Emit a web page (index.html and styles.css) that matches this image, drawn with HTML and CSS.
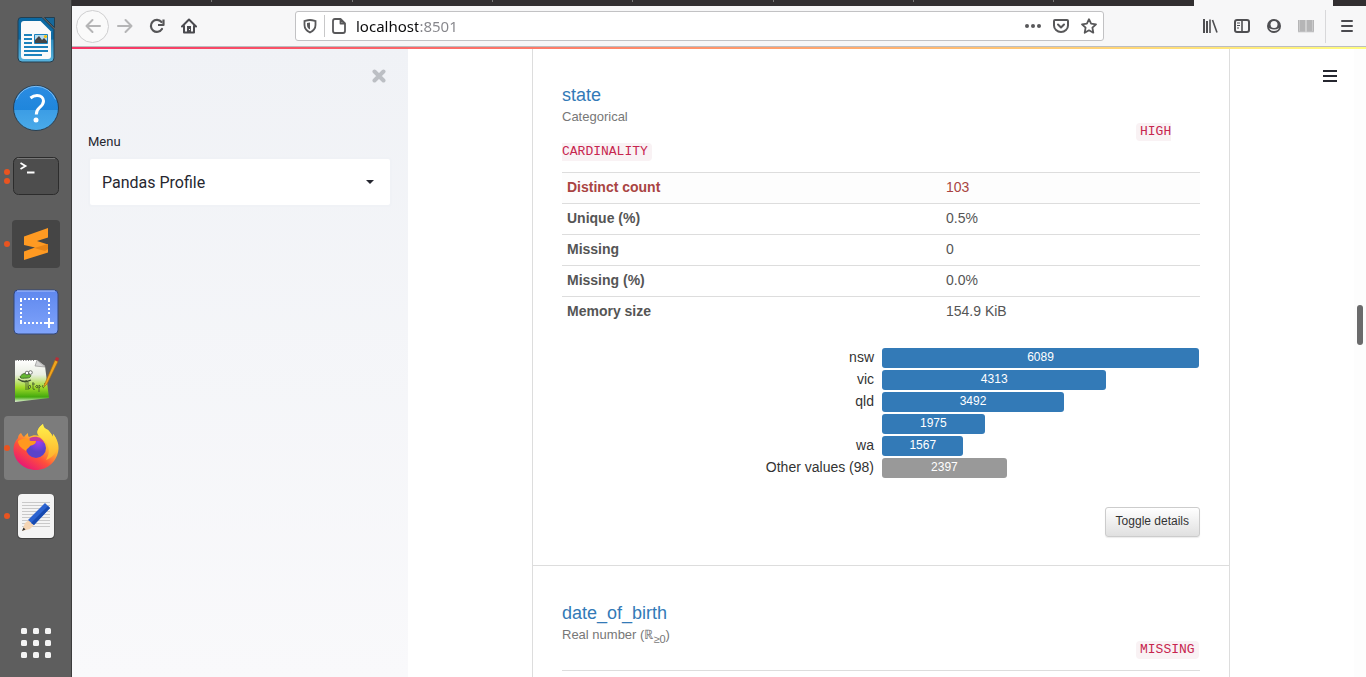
FILE: index.html
```html
<!DOCTYPE html>
<html lang="en">
<head>
<meta charset="utf-8">
<title>Pandas Profile</title>
<link rel="stylesheet" href="styles.css">
</head>
<body class="desktop">
<nav class="dock" aria-label="Applications">
  <button class="app" aria-label="Writer">
    <svg width="48" height="48" viewBox="0 0 48 48">
      <defs><linearGradient id="wr" x2="0" y2="1"><stop offset="0" stop-color="#0b69a3"/><stop offset=".49" stop-color="#0f6ca5"/><stop offset=".5" stop-color="#318fc2"/><stop offset="1" stop-color="#58b3dd"/></linearGradient></defs>
      <path d="M9 1.500h21l12 12V42a4 4 0 0 1-4 4H10a4 4 0 0 1-4-4V5q0-3.500 3-3.500z" fill="url(#wr)" stroke="#243f50"/>
      <path d="M32.500 1.500h10v10z" fill="#16699c" stroke="#243f50"/>
      <path d="M12 5h16.500L39 15.500V40q0 3-3 3H12q-3 0-3-3V8q0-3 3-3z" fill="#fafafa"/>
      <path d="M12 19h8M12 23h8M12 27h8M12 31h24M12 35h24M12 39h18" stroke="#1b82bd" stroke-width="2"/>
      <path d="M22.500 18.500h13v9h-13z" fill="#b6dcf0" stroke="#1b82bd"/>
      <circle cx="33.500" cy="20.500" r="1.600" fill="#f4c20d"/>
      <path d="M23 27v-3l4-4 3 4 2-2 3 3v2z" fill="#444"/>
    </svg>
  </button>
  <button class="app" aria-label="Help">
    <svg width="48" height="48" viewBox="0 0 48 48">
      <defs><linearGradient id="hp" x2="0" y2="1"><stop offset="0" stop-color="#2b8ce2"/><stop offset=".54" stop-color="#1f86dc"/><stop offset=".55" stop-color="#3c9de5"/><stop offset="1" stop-color="#4aabe9"/></linearGradient></defs>
      <circle cx="24" cy="24" r="22.500" fill="url(#hp)" stroke="#2a3f50"/>
      <path d="M4.500 15.500a21 21 0 0 1 39 0" fill="none" stroke="#7fbcf0"/>
      <path d="M18.500 14q3-2.500 6.500-2.500c4 0 6.500 2.300 6.500 5.600 0 3-1.700 4.700-4 6.500-2.200 1.800-3.200 3.300-3.200 6.900" fill="none" stroke="#fff" stroke-width="3"/>
      <circle cx="24" cy="36" r="2.500" fill="#fff"/>
    </svg>
  </button>
  <button class="app app-running app-twice" aria-label="Terminal">
    <svg width="48" height="48" viewBox="0 0 48 48">
      <rect x="1.500" y="5.500" width="45" height="37" rx="5" fill="#4d4d4d" stroke="#2c2c2c"/>
      <path d="M5 6.500h38" stroke="#777"/>
      <path d="M8.500 11l5 3-5 3M15 20.500h7.500" fill="none" stroke="#fff" stroke-width="1.800"/>
    </svg>
  </button>
  <button class="app app-running" aria-label="Sublime Text">
    <svg width="48" height="48" viewBox="0 0 48 48">
      <rect width="48" height="48" rx="4" fill="#454545"/>
      <path d="M12 16.500L36 8v9.500L25 21l11 3.500v8L12 40v-8.500l11-4L12 25z" fill="#ff9a22"/>
      <path d="M22 28l14-4v5l-3 2z" fill="#e88416"/>
    </svg>
  </button>
  <button class="app" aria-label="Screenshot">
    <svg width="48" height="48" viewBox="0 0 48 48">
      <defs><linearGradient id="sc" x2="0" y2="1"><stop offset="0" stop-color="#5f88ee"/><stop offset="1" stop-color="#80a4fb"/></linearGradient></defs>
      <rect x="2" y="2" width="44" height="44" rx="4" fill="url(#sc)" stroke="#334778"/>
      <path d="M5 3h38" stroke="#a9c2ff"/>
      <path d="M8 11h31M9 12v24M8 35h28M37 12v14" fill="none" stroke="#fff" stroke-width="2" stroke-dasharray="2 2"/>
      <path d="M37 30v10M32 35h10" stroke="#fff" stroke-width="2"/>
    </svg>
  </button>
  <button class="app" aria-label="Notepad">
    <svg width="48" height="48" viewBox="0 0 48 48">
      <defs><linearGradient id="np" x2="0" y2="1"><stop offset="0" stop-color="#fff"/><stop offset=".35" stop-color="#e9eee2"/><stop offset=".65" stop-color="#a3db29"/><stop offset=".88" stop-color="#43a90d"/><stop offset="1" stop-color="#e8f6dc"/></linearGradient></defs>
      <path d="M3 4h22l8 6 4 32-34 4z" fill="url(#np)"/>
      <path d="M25 4l-2 6 10 1z" fill="#d5d5d5" stroke="#888" stroke-width=".6"/>
      <path d="M3.500 4.500h20" stroke="#777" stroke-dasharray="1 1.500"/>
      <path d="M8 21c2-4 6-4 9-3s2 4-2 4-6 1-7-1z" fill="#65b832" stroke="#47732d"/>
      <path d="M6 23c4 3 9 3 13 1" fill="none" stroke="#3f4f33" stroke-width="1.300"/>
      <circle cx="15" cy="17" r="1.800" fill="#fff" stroke="#444" stroke-width=".7"/><circle cx="18.500" cy="16.500" r="1.800" fill="#fff" stroke="#444" stroke-width=".7"/>
      <path d="M14 24v10M12 26q3-2 4 0v8M18 29q-3 1-1 4 3-1 1-4M21 26v7q1 1 2 0M20 28h3M25 29q-3 2 0 3 2 0 0-3M27 29v7M27 29q3 1 0 3M31 29q-2 2 1 3M32 28l3-1" fill="none" stroke="#40542b" stroke-width=".8"/>
      <path d="M32.500 28.500L43 4l3 1.500L35 28l-3 3z" fill="#f0a51e" stroke="#a6640e" stroke-width=".6"/>
      <path d="M43 4l1-3 3 1-1 3.500z" fill="#b92e36"/>
    </svg>
  </button>
  <button class="app app-running app-active" aria-label="Firefox">
    <svg width="48" height="48" viewBox="0 0 48 48">
      <defs>
        <linearGradient id="fx" x1=".85" x2=".25" y1=".1" y2="1"><stop offset="0" stop-color="#fff044"/><stop offset=".35" stop-color="#ffb52e"/><stop offset=".65" stop-color="#ff4f3b"/><stop offset="1" stop-color="#e5127b"/></linearGradient>
        <radialGradient id="fp" cx=".6" cy=".2"><stop offset="0" stop-color="#a33bf5"/><stop offset="1" stop-color="#5a43c9"/></radialGradient>
        <linearGradient id="fy" x2="0" y2="1"><stop offset="0" stop-color="#fff14a"/><stop offset="1" stop-color="#ffaf2c"/></linearGradient>
      </defs>
      <path d="M9 9c1 2 2 3 3 4 1-2 3-3 4-4 0 2 0 3 1 4 4-2 7-2 10-1-4-4 0-9 4-12 0 3 2 5 5 6 2 2 4 5 5 7v-3c3 3 6 9 5.500 15C45.500 37 36 46 24 46S1.500 37 1.500 25c0-4 1.500-8 4.500-11 0-2 1-4 3-5z" fill="url(#fx)"/>
      <path d="M27 12c-4-4 0-9 4-12 0 3 2 5 5 6 2 2 4 5 5 7v-3c3 3 5 9 4 15-2 6-6 9-11 11 3-5 4-10 1-16-2-3-5-6-8-8z" fill="url(#fy)"/>
      <circle cx="24" cy="24" r="10" fill="url(#fp)"/>
      <path d="M6 17c3-2 7-3 10-2 1 2 4 2 8 2 0 3-3 4-6 5-1 2-3 2-4 5-5-3-8-6-8-10z" fill="#ff981f"/>
      <path d="M17 15c4-4 13-3 15 4-3-2-5-2-8-2-3 0-5 0-7-2z" fill="#c63a9c"/>
    </svg>
  </button>
  <button class="app app-running" aria-label="Text Editor">
    <svg width="48" height="48" viewBox="0 0 48 48">
      <rect x="5.500" y="2" width="37" height="45" rx="4" fill="#414141"/>
      <rect x="6" y="2" width="36" height="44" rx="4" fill="#f4f4f4"/>
      <path d="M10 10.500h28M10 13.500h28M10 16.500h28M10 19.500h28M10 22.500h28M10 25.500h28M10 28.500h28M10 31.500h28M10 34.500h28" stroke="#c9c9c9"/>
      <path d="M10 39l3-8 4-3 5 5-4 4z" fill="#f5d5b4"/>
      <path d="M10 39l1.500-3.500 2 2z" fill="#333"/>
      <path d="M16 28l17-17 5 5-16 17z" fill="#2b63d1"/>
      <path d="M19 31l17-17 2 2-16 17z" fill="#174ab0"/>
    </svg>
  </button>
  <button class="app app-grid" aria-label="Show applications">
    <svg width="32" height="32" viewBox="0 0 32 32" fill="#f4f4f4">
      <rect x="1" y="1" width="6" height="6" rx="1.500"/><rect x="13" y="1" width="6" height="6" rx="1.500"/><rect x="25" y="1" width="6" height="6" rx="1.500"/>
      <rect x="1" y="13" width="6" height="6" rx="1.500"/><rect x="13" y="13" width="6" height="6" rx="1.500"/><rect x="25" y="13" width="6" height="6" rx="1.500"/>
      <rect x="1" y="25" width="6" height="6" rx="1.500"/><rect x="13" y="25" width="6" height="6" rx="1.500"/><rect x="25" y="25" width="6" height="6" rx="1.500"/>
    </svg>
  </button>
</nav>

<div class="browser">
  <div class="tabs">
    <span class="tab"></span><span class="tab"></span><span class="tab"></span><span class="tab"></span><span class="tab"></span><span class="tab"></span><span class="tab"></span><span class="tab"></span>
    <span class="tab tab-current"></span><span class="tabs-end"></span>
  </div>
  <header class="toolbar">
    <button class="tool tool-back" aria-label="Back"><svg width="16" height="16" viewBox="0 0 16 16" fill="none" stroke="#b5b5b6" stroke-width="2" stroke-linecap="round" stroke-linejoin="round"><path d="M15 8H1.500M7.500 2L1.500 8l6 6"/></svg></button>
    <button class="tool" aria-label="Forward"><svg width="16" height="16" viewBox="0 0 16 16" fill="none" stroke="#b5b5b6" stroke-width="2" stroke-linecap="round" stroke-linejoin="round"><path d="M1 8h13.500M8.500 2l6 6-6 6"/></svg></button>
    <button class="tool" aria-label="Reload"><svg width="16" height="16" viewBox="0 0 16 16"><path d="M12.500 4A6 6 0 1 0 13 11" fill="none" stroke="#555557" stroke-width="2.200" stroke-linecap="round"/><path d="M14.500 1.500V7H9" fill="none" stroke="#555557" stroke-width="2.200" stroke-linejoin="round"/></svg></button>
    <button class="tool" aria-label="Home"><svg width="16" height="16" viewBox="0 0 16 16"><path d="M1 8.500L8 1.500l7 7M3 8v6.500h10V8" fill="none" stroke="#4a4a4f" stroke-width="2" stroke-linecap="round" stroke-linejoin="round"/><path d="M6 14.500V8h4v6.500z" fill="#4a4a4f"/><path d="M8 11h1v1H8z" fill="#f7f7f8"/></svg></button>
    <div class="address">
      <button class="address-icon address-shield" aria-label="Tracking protection"><svg width="16" height="16" viewBox="0 0 16 16"><path d="M8 2c2 0 4 .6 5.500 1v4c0 4-2.500 6-5.500 7.500C5 13 2.500 11 2.500 7V3C4 2.600 6 2 8 2z" fill="none" stroke="#58585a" stroke-width="1.800"/><path d="M8 4.500v7C6 10.500 5 9 5 7V5z" fill="#58585a"/></svg></button>
      <button class="address-icon" aria-label="Site information"><svg width="16" height="16" viewBox="0 0 16 16" fill="none" stroke="#58585a" stroke-width="1.800" stroke-linejoin="round"><path d="M4 1h5.500L14 5.500V13q0 2-2 2H4q-2 0-2-2V3q0-2 2-2zM9.500 1v4.500H14"/></svg></button>
      <input class="address-input" aria-label="Address" value="localhost:8501">
      <button class="address-icon" aria-label="Page actions"><svg width="16" height="16" viewBox="0 0 16 16" fill="#58585a"><circle cx="2" cy="8" r="2"/><circle cx="8" cy="8" r="2"/><circle cx="14" cy="8" r="2"/></svg></button>
      <button class="address-icon" aria-label="Save to Pocket"><svg width="16" height="16" viewBox="0 0 16 16" fill="none" stroke="#58585a" stroke-width="2" stroke-linecap="round" stroke-linejoin="round"><path d="M2 2h12q1 0 1 1v4.500a7 6.500 0 0 1-14 0V3q0-1 1-1z"/><path d="M5 6.500l3 3 3-3"/></svg></button>
      <button class="address-icon" aria-label="Bookmark"><svg width="16" height="16" viewBox="0 0 16 16" fill="none" stroke="#58585a" stroke-width="1.800" stroke-linejoin="round"><path d="M8 1.200l2.100 4.500 4.900.6-3.600 3.400.9 5L8 12.300l-4.300 2.400.9-5L1 6.300l4.900-.6z"/></svg></button>
    </div>
    <button class="tool" aria-label="Library"><svg width="16" height="16" viewBox="0 0 16 16" stroke="#4f4f52" stroke-width="2"><path d="M2 1v14M5 3v12" /><path d="M8 1.500v13.500M10.500 2l4.500 12.500" stroke-width="1.600"/></svg></button>
    <button class="tool" aria-label="Sidebars"><svg width="16" height="16" viewBox="0 0 16 16" fill="none" stroke="#4f4f52"><rect x="1" y="2" width="14" height="12" rx="2" stroke-width="2"/><path d="M8 2v12" stroke-width="1.600"/><path d="M3 5h3M3 7.500h3M3 10h2"/></svg></button>
    <button class="tool" aria-label="Account"><svg width="16" height="16" viewBox="0 0 16 16"><circle cx="8" cy="8" r="7" fill="#4f4f52"/><path d="M4.500 6.500a3.500 3.500 0 0 1 7 0 3.500 3.500 0 0 1-7 0z" fill="#f7f7f8"/><path d="M3 10q1 3 5 3t5-3q-2 1.500-5 1.500T3 10z" fill="#f7f7f8"/></svg></button>
    <button class="tool" aria-label="Reader"><svg width="16" height="16" viewBox="0 0 16 16"><path d="M0 2h7.600v12H0zM8.400 2H16v12H8.400z" fill="#b5b5b6"/><path d="M0 14h16M1.500 2v11M14.500 2v11" stroke="#cfcfd0" stroke-width=".8"/></svg></button>
    <span class="tool-rule"></span>
    <button class="tool" aria-label="Open menu"><svg width="16" height="16" viewBox="0 0 16 16" stroke="#4a4a4f" stroke-width="2" stroke-linecap="round"><path d="M3 3h10M3 8h10M3 13h10"/></svg></button>
  </header>

  <div class="page">
    <div class="decoration"></div>
    <aside class="sidebar">
      <button class="sidebar-close" aria-label="Close sidebar"><svg width="14" height="14" viewBox="0 0 14 14" stroke="#bcbfc4" stroke-width="4" stroke-linecap="round"><path d="M2.500 2.500l9 9M11.500 2.500l-9 9"/></svg></button>
      <label class="menu-label" for="menu">Menu</label>
      <div class="menu-field">
        <select class="menu-select" id="menu"><option>Pandas Profile</option></select>
        <svg class="menu-caret" width="8" height="4" viewBox="0 0 8 4"><path d="M0 0h8L4 4z" fill="#262730"/></svg>
      </div>
    </aside>
    <main class="main">
      <button class="main-menu" aria-label="Main menu"><svg width="16" height="14" viewBox="0 0 16 14" stroke="#262730" stroke-width="2"><path d="M1 2h14M1 7h14M1 12h14"/></svg></button>
      <div class="report">
        <section class="card">
          <div class="card-head">
            <h4 class="variable"><a class="variable-link" href="#state">state</a><small class="variable-type">Categorical</small></h4>
            <div class="flag flag-side"><code class="code code-open">HIGH</code></div>
          </div>
          <div class="flag"><code class="code code-close">CARDINALITY</code></div>
          <table class="stats">
            <tr class="alert"><th>Distinct count</th><td>103</td></tr>
            <tr><th>Unique (%)</th><td>0.5%</td></tr>
            <tr><th>Missing</th><td>0</td></tr>
            <tr><th>Missing (%)</th><td>0.0%</td></tr>
            <tr><th>Memory size</th><td>154.9 KiB</td></tr>
          </table>
          <div class="freq">
            <span class="freq-label">nsw</span><div class="freq-track"><div class="bar" style="width:100%">6089</div></div>
            <span class="freq-label">vic</span><div class="freq-track"><div class="bar" style="width:70.8%">4313</div></div>
            <span class="freq-label">qld</span><div class="freq-track"><div class="bar" style="width:57.4%">3492</div></div>
            <span class="freq-label"></span><div class="freq-track"><div class="bar" style="width:32.4%">1975</div></div>
            <span class="freq-label">wa</span><div class="freq-track"><div class="bar" style="width:25.7%">1567</div></div>
            <span class="freq-label">Other values (98)</span><div class="freq-track"><div class="bar bar-other" style="width:39.4%">2397</div></div>
          </div>
          <div class="card-actions"><button class="toggle">Toggle details</button></div>
        </section>
        <section class="card">
          <div class="card-head">
            <h4 class="variable"><a class="variable-link" href="#date_of_birth">date_of_birth</a><small class="variable-type">Real number (ℝ<sub class="domain">≥0</sub>)</small></h4>
            <div class="flag flag-side"><code class="code">MISSING</code></div>
          </div>
          <table class="stats"><tr><th></th><td></td></tr></table>
        </section>
      </div>
      <div class="scrollbar"><div class="scroll-thumb"></div></div>
    </main>
  </div>
</div>
</body>
</html>
```

FILE: styles.css
```css
* { box-sizing: border-box; }

button {
  padding: 0;
  border: 0;
  background: none;
  font: inherit;
}

svg { display: block; }

.desktop {
  display: flex;
  height: 100vh;
  margin: 0;
  overflow: hidden;
  font-family: "Liberation Sans", Arial, sans-serif;
  font-size: 14px;
  line-height: 20px;
  color: #333;
  background: #fff;
}

/* Dock */
.dock {
  display: flex;
  flex: none;
  flex-direction: column;
  align-items: center;
  gap: 4px;
  width: 72px;
  padding: 8px 0 2px;
  background: #5e5e5e;
  border-right: 1px solid #3c3c3c;
}

.app {
  position: relative;
  display: grid;
  flex: none;
  place-items: center;
  width: 64px;
  height: 64px;
  border-radius: 4px;
}

.app-active { background: #7c7c7c; }

.app-running::before,
.app-twice::after {
  content: "";
  position: absolute;
  left: 0;
  top: 29px;
  width: 6px;
  height: 6px;
  border-radius: 50%;
  background: #e95420;
}

.app-twice::before { top: 25px; }
.app-twice::after { top: 34px; }
.app-grid { margin-top: auto; }

/* Browser frame */
.browser {
  display: flex;
  flex: 1;
  flex-direction: column;
  min-width: 0;
}

.tabs {
  display: flex;
  flex: none;
  height: 6px;
  background: #322f31;
}

.tab {
  flex: 1;
  height: 2px;
  border-right: 1px solid #777;
}

.tab:nth-child(8) { border: 0; }

.tab-current {
  height: 6px;
  border: 0;
  background: #f7f7f8;
}

.tabs-end { width: 33px; }

.toolbar {
  display: flex;
  flex: none;
  align-items: center;
  height: 41px;
  padding: 0 3px 0 4px;
  background: #f7f7f8;
  border-bottom: 1px solid #bdbdbf;
}

.tool {
  display: grid;
  flex: none;
  place-items: center;
  width: 32px;
  height: 32px;
}

.tool-back {
  width: 33px;
  height: 33px;
  border: 1px solid #cfcfd0;
  border-radius: 50%;
  background: #fafafa;
}

.tool-rule {
  width: 1px;
  height: 33px;
  margin: 0 5px 0 3px;
  background: #d8d8da;
}

.address {
  display: flex;
  flex: 1;
  align-items: center;
  height: 30px;
  min-width: 0;
  margin: 0 90px;
  background: #fff;
  border: 1px solid #c2c2c4;
  border-radius: 3px;
}

.address-icon {
  display: grid;
  flex: none;
  place-items: center;
  width: 28px;
  height: 28px;
}

.address-shield {
  width: 29px;
  height: 22px;
  border-right: 1px solid #c8c8c9;
}

.address-input {
  flex: 1;
  min-width: 0;
  height: 28px;
  padding: 0 3px;
  border: 0;
  outline: 0;
  font-family: "Noto Sans", sans-serif;
  font-size: 15px;
  color: transparent;
  background: linear-gradient(90deg, #0c0c0d 65px, #85858a 65px);
  -webkit-background-clip: text;
  background-clip: text;
}

/* Page */
.page {
  position: relative;
  display: flex;
  flex: 1;
  min-height: 0;
}

.decoration {
  position: absolute;
  z-index: 1;
  top: 0;
  left: 0;
  right: 0;
  height: 2px;
  background: linear-gradient(90deg, #f63366, #ff8c69 45%, #fffd80);
}

.sidebar {
  display: flex;
  flex: none;
  flex-direction: column;
  width: 336px;
  padding: 22px 16px;
  background: linear-gradient(180deg, #f0f2f6, #f9f9fb);
}

.sidebar-close {
  align-self: flex-end;
  padding: 0 6px;
}

.menu-label {
  margin-top: 49px;
  font-family: Roboto, sans-serif;
  font-size: 13px;
  color: #262730;
}

.menu-field {
  display: grid;
  align-items: center;
  margin-top: 5px;
}

.menu-select {
  grid-area: 1 / 1;
  width: 100%;
  height: 50px;
  padding: 0 12px;
  appearance: none;
  border: 2px solid #f0f2f6;
  border-radius: 4px;
  font-family: Roboto, sans-serif;
  font-size: 16px;
  color: #262730;
  background: #fff;
}

.menu-caret {
  grid-area: 1 / 1;
  justify-self: end;
  margin-right: 18px;
  pointer-events: none;
}

.main {
  position: relative;
  display: flex;
  flex: 1;
  min-width: 0;
  overflow: hidden;
}

.main-menu {
  position: absolute;
  top: 22px;
  right: 28px;
}

.scrollbar {
  flex: none;
  width: 12px;
  padding: 258px 3px 0;
  background: #fdfdfd;
}

.scroll-thumb {
  height: 40px;
  border-radius: 3px;
  background: #6b6b6c;
}

/* Report */
.report {
  flex: 0 1 698px;
  min-width: 0;
  margin: 0 auto;
  border: solid #ddd;
  border-width: 0 1px;
}

.card {
  padding: 37px 29px 28px;
  border-top: 1px solid #ddd;
}

.card-head {
  display: flex;
  align-items: flex-end;
  justify-content: space-between;
}

.variable {
  display: flex;
  flex-direction: column;
  margin: 0;
  padding-bottom: 13px;
  font-size: 18px;
  font-weight: 400;
}

.variable-link {
  color: #337ab7;
  text-decoration: none;
}

.variable-type {
  font-size: 13px;
  line-height: 24px;
  color: #777;
}

.domain {
  font-size: 11px;
  line-height: 0;
}

.flag {
  display: flex;
  align-items: center;
  height: 20px;
}

.flag-side { width: 64px; }

.code {
  padding: 2px 4px;
  border-radius: 4px;
  font-family: "Liberation Mono", monospace;
  font-size: 13px;
  line-height: 14px;
  color: #c7254e;
  background: #f9f2f4;
}

.code-open {
  padding-right: 0;
  border-radius: 4px 0 0 4px;
}

.code-close {
  padding-left: 0;
  border-radius: 0 4px 4px 0;
}

.stats {
  width: 100%;
  margin-top: 10px;
  border-collapse: separate;
  border-spacing: 0;
  table-layout: fixed;
  color: #555;
}

.stats th,
.stats td {
  height: 31px;
  padding: 4px 5px 6px;
  border-top: 1px solid #ddd;
  text-align: left;
}

.stats th { width: 59.4%; }

.stats .alert {
  color: #a94442;
  background: #fdfdfd;
}

.freq {
  display: grid;
  grid-template-columns: 1fr 1fr;
  row-gap: 2px;
  margin-top: 21px;
}

.freq-label {
  padding-right: 7px;
  line-height: 18px;
  text-align: right;
}

.freq-track { padding: 0 1px; }

.bar {
  height: 20px;
  border-radius: 3px;
  font-size: 12px;
  line-height: 18px;
  text-align: center;
  color: #fff;
  background: #337ab7;
}

.bar-other { background: #999; }

.card-actions {
  display: flex;
  justify-content: flex-end;
  margin-top: 29px;
}

.toggle {
  height: 30px;
  padding: 0 10px 2px;
  border: 1px solid #ccc;
  border-radius: 3px;
  font-size: 12px;
  color: #333;
  background: linear-gradient(#fff, #e0e0e0);
  box-shadow: 0 1px 1px rgba(0, 0, 0, .08);
}
```
